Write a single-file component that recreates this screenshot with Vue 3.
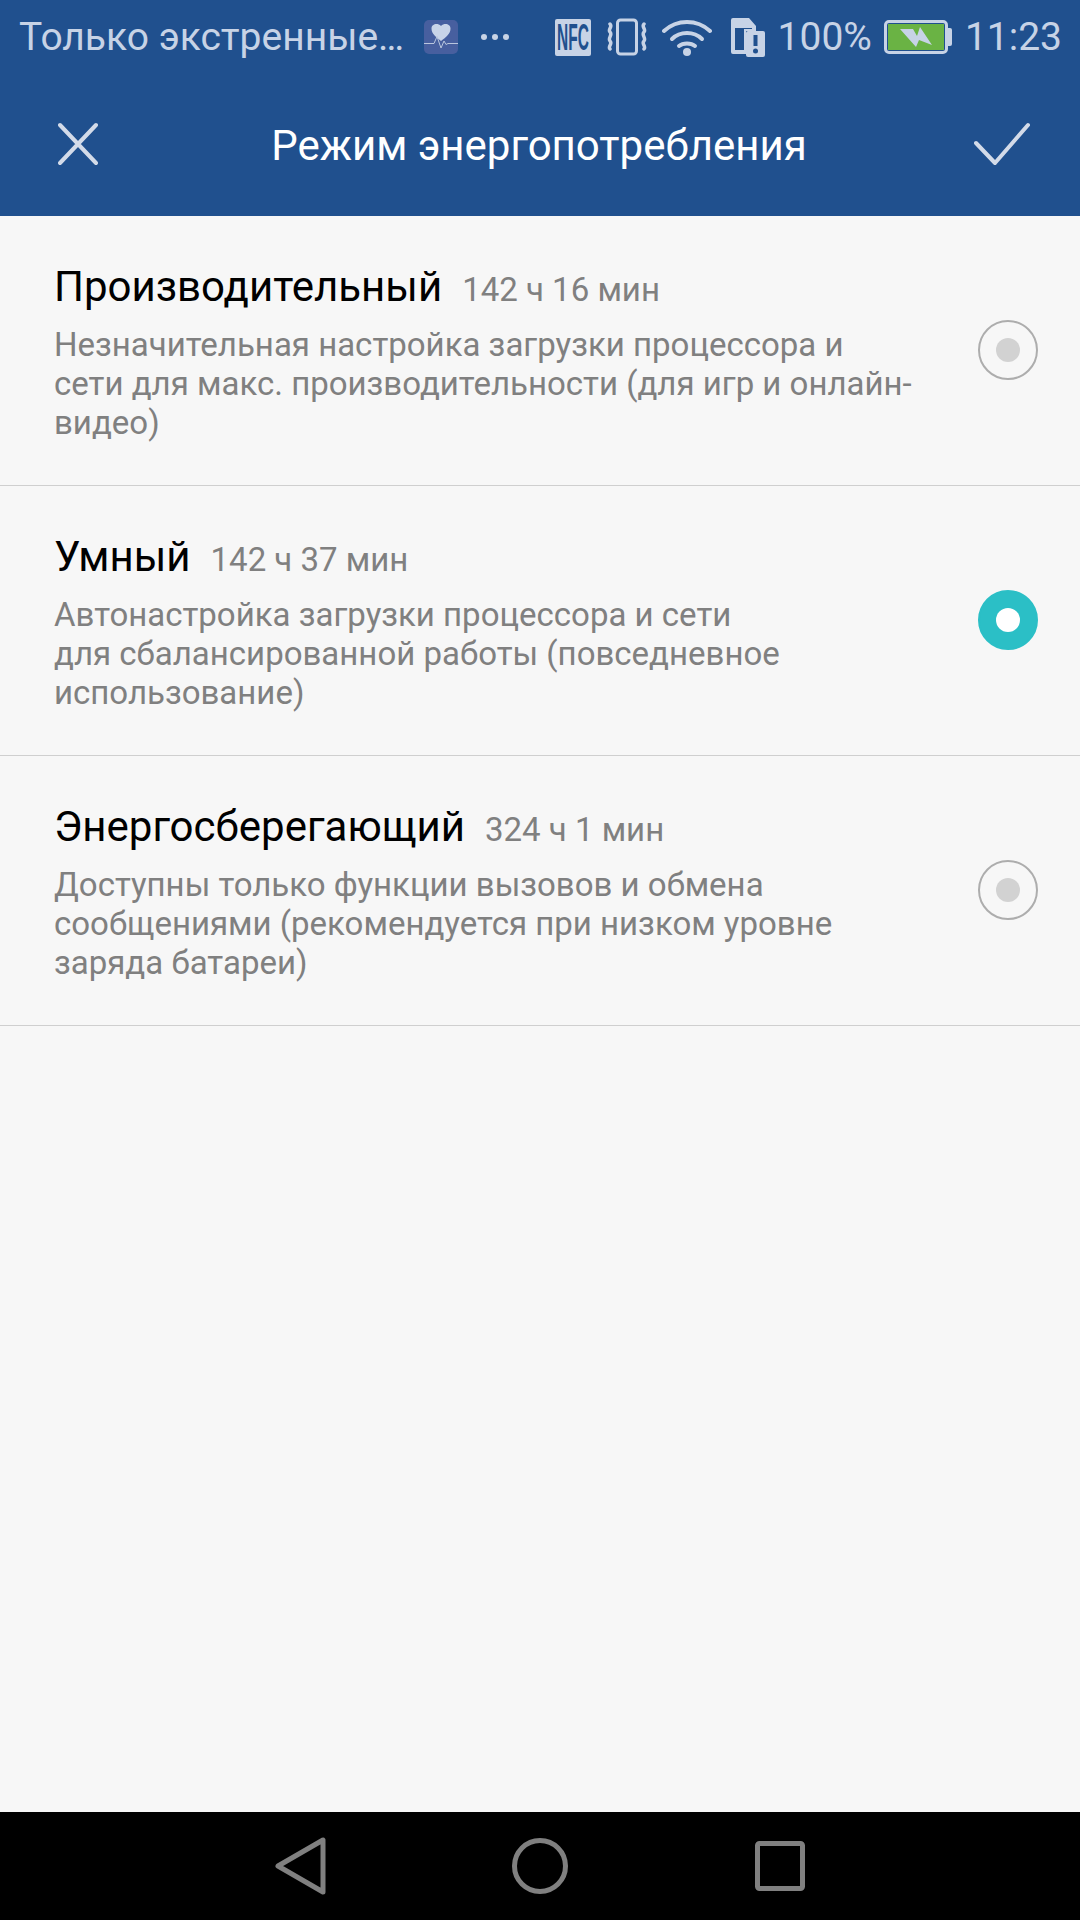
<template>
  <div class="screen">
    <header class="header">
      <div class="status-bar">
        <span class="status-text">Только экстренные…</span>
        <svg class="app-icon" width="34" height="34" viewBox="0 0 34 34">
          <rect width="34" height="34" rx="5" fill="#475f9f" />
          <path d="M17 21 C12 17 7.500 14 7.500 8.500 C7.500 4 13.500 2.500 17 6 C20.500 2.500 26.500 4 26.500 8.500 C26.500 14 22 17 17 21Z" fill="#c9d4e8" />
          <path d="M0 23.500 H10 L13 16.500 L17 28 L20 21 L22 24.500 L24 23.500 H34" fill="none" stroke="#b9c6de" stroke-width="1" />
        </svg>
        <div class="dots"><i></i><i></i><i></i></div>
        <div class="spacer"></div>
        <div class="nfc"><span>NFC</span></div>
        <svg class="vibrate" width="40" height="38" viewBox="0 0 40 38" fill="none" stroke="#c7d3e6">
          <rect x="10.500" y="2" width="19" height="34" rx="3" stroke-width="3" />
          <path d="M3 6 C6 9 0.500 11 3 14 C6 17 0.500 20 3 23 C6 26 0.500 28 3 31" stroke-width="3.500" stroke-linecap="round" />
          <path d="M37 6 C34 9 39.500 11 37 14 C34 17 39.500 20 37 23 C34 26 39.500 28 37 31" stroke-width="3.500" stroke-linecap="round" />
        </svg>
        <svg class="wifi" width="50" height="38" viewBox="0 0 50 38" fill="none" stroke="#c7d3e6" stroke-width="4" stroke-linecap="round">
          <path d="M2 13 C15 1 35 1 48 13" />
          <path d="M10 21 C18 13 32 13 40 21" />
          <path d="M17 28 C21 24.500 29 24.500 33 28" />
          <circle cx="25" cy="34" r="4" fill="#c7d3e6" stroke="none" />
        </svg>
        <svg class="sim" width="34" height="39" viewBox="0 0 34 39">
          <path d="M2 0 H18 L25 8 V13 H15 V36 H2 A2 2 0 0 1 0 34 V2 A2 2 0 0 1 2 0Z" fill="#c7d3e6" />
          <path d="M4 10 H21 V11 H13 V32 H4Z" fill="#20508e" />
          <rect x="15" y="13" width="19" height="26" rx="2" fill="#c7d3e6" />
          <rect x="22.500" y="17" width="4" height="11" fill="#20508e" />
          <circle cx="24.500" cy="33" r="2.500" fill="#20508e" />
        </svg>
        <span class="status-text battery-pct">100%</span>
        <div class="battery">
          <div class="battery-body">
            <div class="battery-fill">
              <svg width="32" height="20" viewBox="0 0 32 20">
                <path d="M0 2 L13 2 L17 9 L20 0 L32 18 L19 13 L16 20Z" fill="#c7d3e6" />
              </svg>
            </div>
          </div>
          <div class="battery-cap"></div>
        </div>
        <span class="status-text clock">11:23</span>
      </div>
      <div class="toolbar">
        <svg class="tool-icon" width="40" height="44" viewBox="0 0 40 44" fill="none" stroke="#d3dbe9" stroke-width="4" stroke-linecap="round">
          <path d="M2 3 L38 41 M38 3 L2 41" />
        </svg>
        <div class="toolbar-title">Режим энергопотребления</div>
        <svg class="tool-icon" width="56" height="44" viewBox="0 0 56 44" fill="none" stroke="#d3dbe9" stroke-width="4" stroke-linecap="round" stroke-linejoin="round">
          <path d="M2 21 L21 41 L54 3" />
        </svg>
      </div>
    </header>

    <main class="list">
      <div v-for="mode in modes" :key="mode.name" class="mode">
        <div class="mode-text">
          <div class="mode-head">
            <span class="mode-name">{{ mode.name }}</span>
            <span class="mode-time">{{ mode.time }}</span>
          </div>
          <div class="mode-desc">{{ mode.desc }}</div>
        </div>
        <div class="radio" :class="{ active: mode.active }"><i></i></div>
      </div>
    </main>

    <nav class="nav-bar">
      <svg width="54" height="60" viewBox="0 0 54 60" fill="none" stroke="#808080" stroke-width="5" stroke-linejoin="round">
        <path d="M4 30 L49 4 V56Z" />
      </svg>
      <svg width="56" height="56" viewBox="0 0 56 56" fill="none" stroke="#808080" stroke-width="5">
        <circle cx="28" cy="28" r="25.500" />
      </svg>
      <svg width="50" height="50" viewBox="0 0 50 50" fill="none" stroke="#808080" stroke-width="5" stroke-linejoin="round">
        <rect x="2.500" y="2.500" width="45" height="45" rx="2" />
      </svg>
    </nav>
  </div>
</template>

<script setup>
const modes = [
  {
    name: 'Производительный',
    time: '142 ч 16 мин',
    desc: 'Незначительная настройка загрузки процессора и\nсети для макс. производительности (для игр и онлайн-\nвидео)',
    active: false
  },
  {
    name: 'Умный',
    time: '142 ч 37 мин',
    desc: 'Автонастройка загрузки процессора и сети\nдля сбалансированной работы (повседневное\nиспользование)',
    active: true
  },
  {
    name: 'Энергосберегающий',
    time: '324 ч 1 мин',
    desc: 'Доступны только функции вызовов и обмена\nсообщениями (рекомендуется при низком уровне\nзаряда батареи)',
    active: false
  }
]
</script>

<style>
html,
body {
  margin: 0;
  background: #f7f7f7;
}
</style>

<style scoped>
.screen {
  width: 1080px;
  height: 1920px;
  display: flex;
  flex-direction: column;
  background: #f7f7f7;
  font-family: Roboto, "Noto Sans", sans-serif;
  overflow: hidden;
}

.header {
  background: #20508e;
}

.status-bar {
  height: 72px;
  display: flex;
  align-items: center;
  padding: 2px 18px 0 19px;
  box-sizing: border-box;
}

.status-text {
  font-size: 39px;
  color: #c7d3e6;
  white-space: nowrap;
}

.app-icon {
  margin-left: 20px;
  flex-shrink: 0;
}

.dots {
  display: flex;
  gap: 5px;
  margin-left: 23px;
}

.dots i {
  width: 6px;
  height: 6px;
  border-radius: 50%;
  background: #c7d3e6;
}

.spacer {
  flex: 1;
}

.nfc {
  width: 36px;
  height: 37px;
  background: #c7d3e6;
  border-radius: 2px;
  display: flex;
  align-items: center;
  justify-content: center;
}

.nfc span {
  font-family: "Liberation Sans", sans-serif;
  font-size: 36px;
  line-height: 37px;
  font-weight: 700;
  color: #20508e;
  transform: scaleX(0.43);
}

.vibrate {
  margin-left: 16px;
}

.wifi {
  margin-left: 15px;
}

.sim {
  margin-left: 19px;
}

.battery-pct {
  margin-left: 13px;
}

.battery {
  display: flex;
  align-items: center;
  margin-left: 12px;
}

.battery-body {
  width: 64px;
  height: 34px;
  box-sizing: border-box;
  border: 3px solid #c7d3e6;
  border-radius: 5px;
  padding: 1px;
}

.battery-fill {
  height: 100%;
  background: #6ab344;
  display: flex;
  align-items: center;
  justify-content: center;
}

.battery-cap {
  width: 4px;
  height: 18px;
  background: #c7d3e6;
  border-radius: 0 2px 2px 0;
}

.clock {
  margin-left: 13px;
}

.toolbar {
  height: 144px;
  display: flex;
  align-items: center;
  justify-content: space-between;
  padding: 0 50px 0 58px;
}

.toolbar-title {
  font-size: 42px;
  color: #fff;
  padding: 3px 0 0 6px;
}

.list {
  flex: 1;
}

.mode {
  height: 270px;
  box-sizing: border-box;
  border-bottom: 1px solid #cfcfcf;
  display: flex;
  align-items: center;
  justify-content: space-between;
  padding: 0 42px 0 54px;
}

.mode-text {
  padding-top: 2px;
}

.mode-head {
  display: flex;
  align-items: baseline;
  gap: 20px;
  margin-bottom: 14px;
}

.mode-name {
  font-size: 42px;
  color: #000;
}

.mode-time {
  font-size: 33px;
  color: #808080;
}

.mode-desc {
  font-size: 33px;
  line-height: 39px;
  color: #808080;
  white-space: pre-line;
}

.radio {
  width: 60px;
  height: 60px;
  box-sizing: border-box;
  border: 2px solid #adadad;
  border-radius: 50%;
  margin-bottom: 2px;
  display: flex;
  align-items: center;
  justify-content: center;
}

.radio i {
  width: 24px;
  height: 24px;
  border-radius: 50%;
  background: #d2d2d2;
}

.radio.active {
  background: #2bbfc6;
  border-color: #2bbfc6;
}

.radio.active i {
  background: #fff;
}

.nav-bar {
  height: 108px;
  background: #000;
  display: flex;
  align-items: center;
  padding-left: 274px;
  gap: 184px;
}

.nav-bar svg:last-child {
  margin-left: 3px;
}
</style>
